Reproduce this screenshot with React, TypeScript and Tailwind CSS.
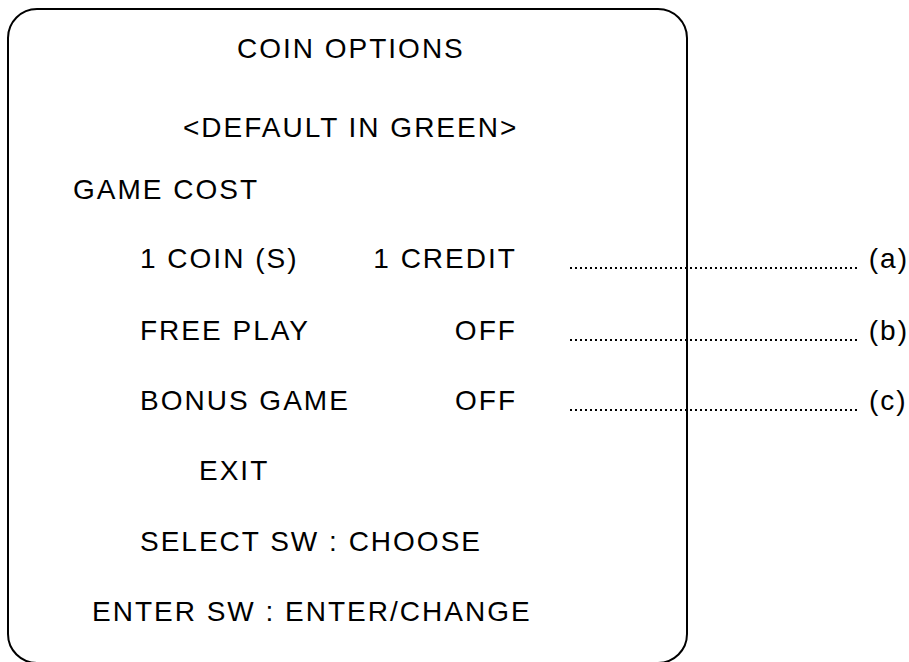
const dots =
  'h-[2px] w-[287px] bg-[linear-gradient(to_right,#000_2px,transparent_2px)] bg-[length:5px_2px] bg-repeat-x';

function Option({
  label,
  value,
  note,
  className,
}: {
  label: string;
  value: string;
  note: string;
  className: string;
}) {
  return (
    <div className={`flex w-[900px] items-start pl-[131px] ${className}`}>
      <div className="flex w-[377px] justify-between">
        <span>{label}</span>
        <span>{value}</span>
      </div>
      <div className={`ml-[53px] mt-[24px] ${dots}`} />
      <span className="ml-[12px]">{note}</span>
    </div>
  );
}

export default function App() {
  return (
    <div className="h-[662px] w-[909px] overflow-hidden bg-white pl-[7px] pt-[8px] font-['Liberation_Sans',Arial,sans-serif] text-[28px] leading-[32px] tracking-[2px] text-black">
      <div className="h-[656px] w-[681px] rounded-[30px] border-2 border-black pt-[23px]">
        <p className="pl-[228px]">COIN OPTIONS</p>
        <p className="mt-[47px] pl-[174px]">&lt;DEFAULT IN GREEN&gt;</p>
        <p className="mt-[30px] pl-[64px]">GAME COST</p>
        <Option className="mt-[37px]" label="1 COIN (S)" value="1 CREDIT" note="(a)" />
        <Option className="mt-[40px]" label="FREE PLAY" value="OFF" note="(b)" />
        <Option className="mt-[38px]" label="BONUS GAME" value="OFF" note="(c)" />
        <p className="mt-[38px] pl-[190px]">EXIT</p>
        <p className="mt-[39px] pl-[131px]">SELECT SW : CHOOSE</p>
        <p className="mt-[38px] pl-[83px]">ENTER SW : ENTER/CHANGE</p>
      </div>
    </div>
  );
}
